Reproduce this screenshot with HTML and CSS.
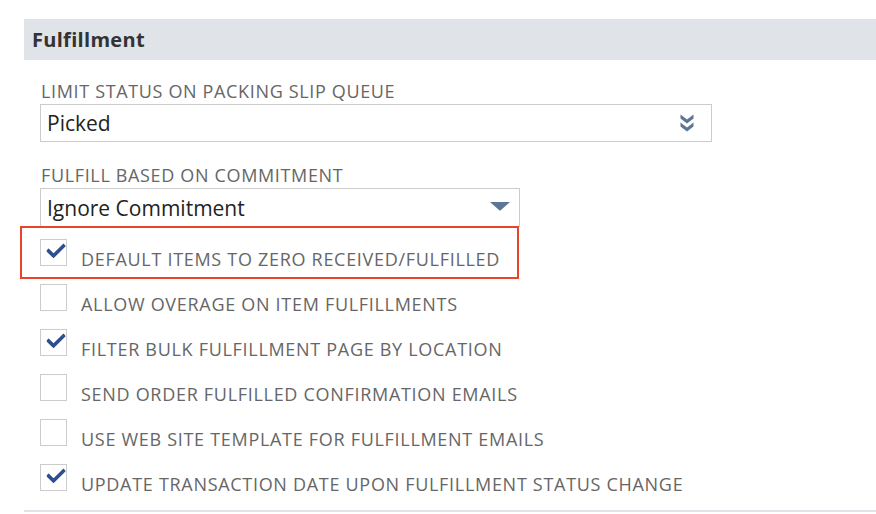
FILE: index.html
```html
<!DOCTYPE html>
<html lang="en">
<head>
    <meta charset="UTF-8">
    <meta name="viewport" content="width=device-width, initial-scale=1.0">
    <title>Fulfillment</title>
    <link rel="stylesheet" href="styles.css">
</head>
<body>
    <div class="section">
        <div class="section-header">Fulfillment</div>
        <div class="section-body">
            <div class="field">
                <label class="field-label">LIMIT STATUS ON PACKING SLIP QUEUE</label>
                <div class="select select-wide">
                    <span class="select-value">Picked</span>
                    <svg class="icon-multi" width="14" height="20" viewBox="0 0 14 20">
                        <path d="M0.5 1.5 L7 6.5 L13.5 1.5 L13.5 5.5 L7 10.5 L0.5 5.5 Z" fill="#5d7597"/>
                        <path d="M0.5 9.5 L7 14.5 L13.5 9.5 L13.5 13.5 L7 18.5 L0.5 13.5 Z" fill="#5d7597"/>
                    </svg>
                </div>
            </div>
            <div class="field field-second">
                <label class="field-label">FULFILL BASED ON COMMITMENT</label>
                <div class="select select-narrow">
                    <span class="select-value">Ignore Commitment</span>
                    <svg class="icon-down" width="20" height="9" viewBox="0 0 20 9">
                        <path d="M0 0 L20 0 L11 8 Q10 9 9 8 Z" fill="#5d7597"/>
                    </svg>
                </div>
            </div>
            <div class="options">
                <div class="option highlight">
                    <span class="checkbox checked"></span>
                    <span class="option-label">DEFAULT ITEMS TO ZERO RECEIVED/FULFILLED</span>
                </div>
                <div class="option">
                    <span class="checkbox"></span>
                    <span class="option-label">ALLOW OVERAGE ON ITEM FULFILLMENTS</span>
                </div>
                <div class="option">
                    <span class="checkbox checked"></span>
                    <span class="option-label">FILTER BULK FULFILLMENT PAGE BY LOCATION</span>
                </div>
                <div class="option">
                    <span class="checkbox"></span>
                    <span class="option-label">SEND ORDER FULFILLED CONFIRMATION EMAILS</span>
                </div>
                <div class="option">
                    <span class="checkbox"></span>
                    <span class="option-label">USE WEB SITE TEMPLATE FOR FULFILLMENT EMAILS</span>
                </div>
                <div class="option">
                    <span class="checkbox checked"></span>
                    <span class="option-label">UPDATE TRANSACTION DATE UPON FULFILLMENT STATUS CHANGE</span>
                </div>
            </div>
        </div>
        <div class="section-footer"></div>
    </div>
</body>
</html>
```

FILE: styles.css
```css
body {
    font-family: "Open Sans", Arial, sans-serif;
    background-color: #ffffff;
    color: #666666;
    margin: 0;
}
.section {
    margin: 19px 0 0 24px;
}
.section-header {
    background-color: #e0e3e8;
    height: 41px;
    padding-left: 8px;
    font-size: 20px;
    letter-spacing: 0.3px;
    font-weight: bold;
    color: #333333;
    line-height: 41px;
}
.section-body {
    padding-left: 16px;
}
.field {
    padding-top: 18px;
}
.field-second {
    padding-top: 20px;
}
.field-label {
    display: block;
    font-size: 18px;
    letter-spacing: 0.65px;
    line-height: 26px;
    color: #666666;
    margin-left: 1px;
}
.select {
    height: 38px;
    border: 1px solid #cccccc;
    box-sizing: border-box;
    display: flex;
    align-items: center;
    justify-content: space-between;
    padding: 0 17px 0 6px;
}
.select-wide {
    width: 672px;
}
.select-narrow {
    width: 480px;
    padding-right: 9px;
    height: 39px;
}
.select-value {
    font-size: 21px;
    color: #222222;
}
.icon-down {
    margin-top: -2px;
}
.options {
    margin-top: -1px;
}
.option {
    display: flex;
    align-items: flex-start;
    height: 45px;
    box-sizing: border-box;
    padding-top: 5px;
}
.option.highlight {
    border: 2px solid #e8432b;
    width: 499px;
    height: 53px;
    margin-left: -20px;
    padding: 11px 0 0 18px;
}
.checkbox {
    width: 27px;
    height: 27px;
    border: 1px solid #cccccc;
    box-sizing: border-box;
    position: relative;
    flex-shrink: 0;
}
.checkbox.checked::after {
    content: "";
    position: absolute;
    left: 6px;
    top: 3px;
    width: 14px;
    height: 7px;
    border-left: 4px solid #2d4f8e;
    border-bottom: 4px solid #2d4f8e;
    border-radius: 2px;
    transform: rotate(-45deg);
}
.option-label {
    font-size: 18px;
    letter-spacing: 0.7px;
    line-height: 20px;
    margin-left: 14px;
    margin-top: 10px;
}
.section-footer {
    height: 2px;
    background-color: #e0e3e8;
    margin-top: 6px;
}
```
